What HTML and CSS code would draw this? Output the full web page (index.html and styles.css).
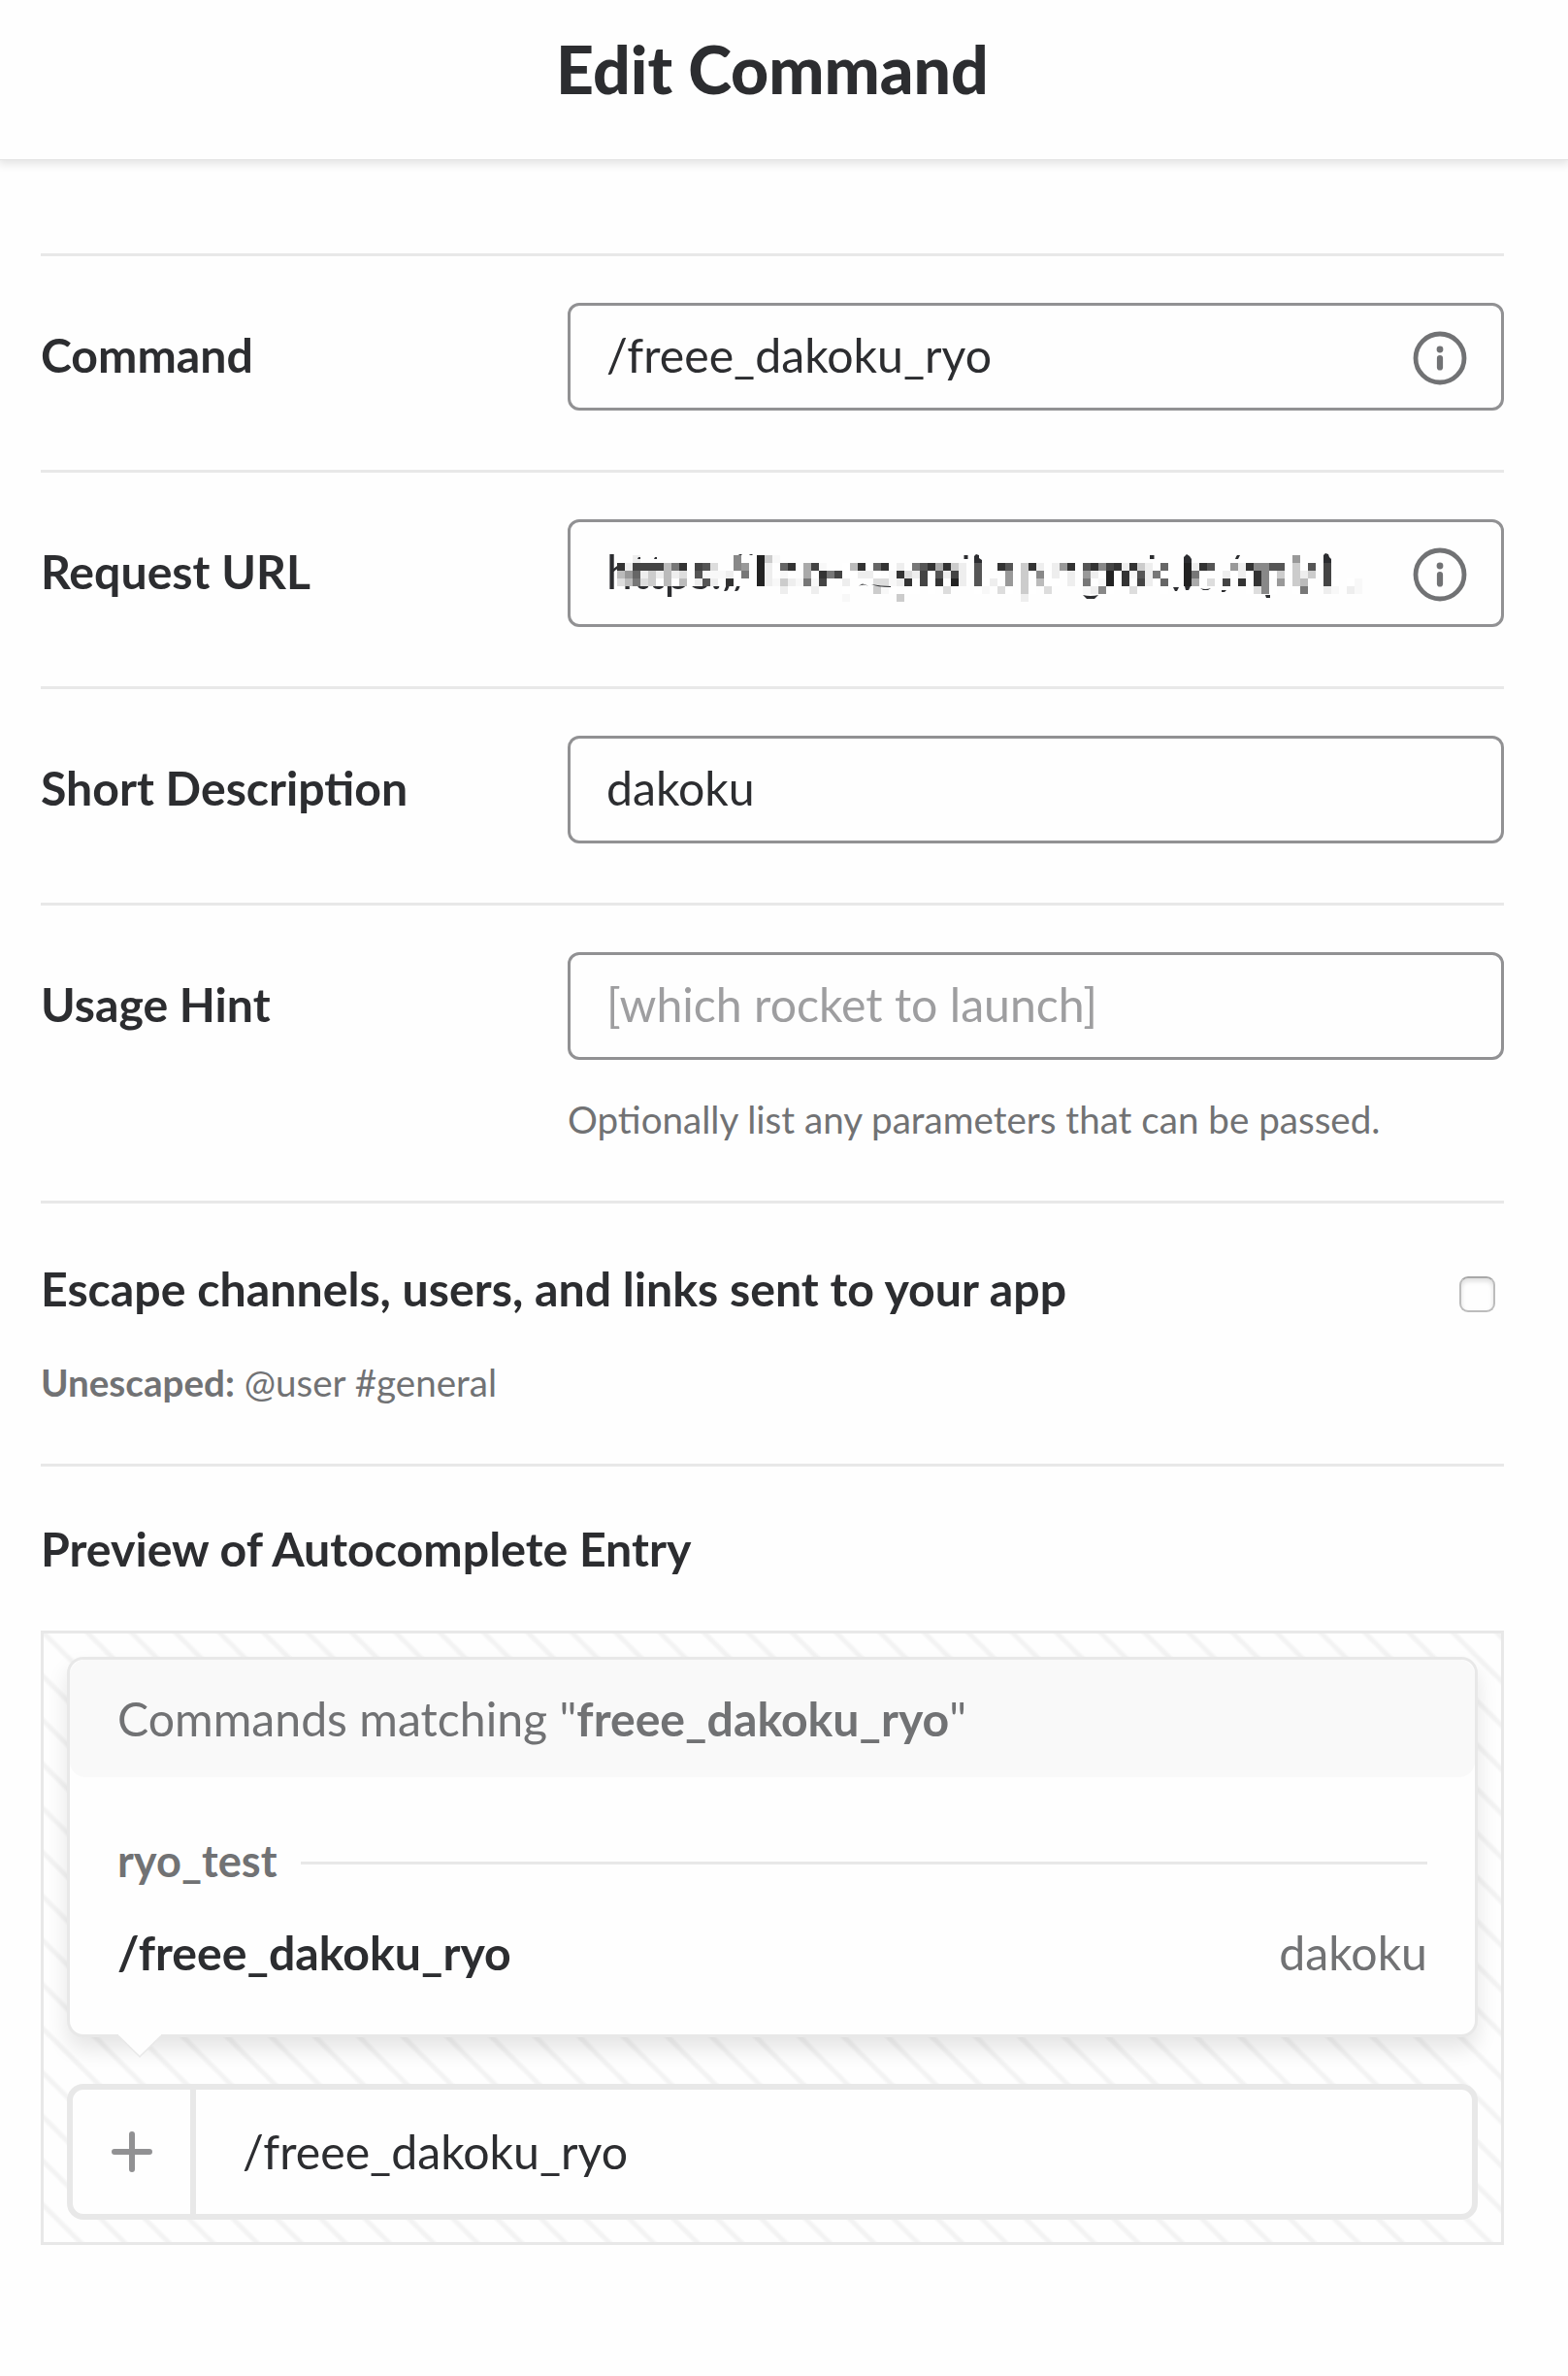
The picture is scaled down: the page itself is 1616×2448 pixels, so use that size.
FILE: index.html
```html
<!DOCTYPE html>
<html lang="en">
<head>
<meta charset="utf-8">
<title>Edit Command</title>
<link rel="stylesheet" href="styles.css">
</head>
<body>
<header class="header"><h1 class="title">Edit Command</h1></header>
<main class="form">
  <section class="row">
    <label class="label">Command</label>
    <div class="field"><div class="input"><span>/freee_dakoku_ryo</span>
      <svg class="info" viewBox="0 0 56 56"><circle cx="28" cy="28" r="25" fill="none" stroke="#717274" stroke-width="4.8"/><circle cx="28" cy="19" r="3.4" fill="#717274"/><path d="M28 28v9.4" stroke="#717274" stroke-width="6.2" stroke-linecap="round"/></svg>
    </div></div>
  </section>
  <section class="row">
    <label class="label">Request URL</label>
    <div class="field"><div class="input"><span>https://</span>
      <svg class="mosaic" id="mosaic" viewBox="0 0 800 56"></svg>
      <svg class="info" viewBox="0 0 56 56"><circle cx="28" cy="28" r="25" fill="none" stroke="#717274" stroke-width="4.8"/><circle cx="28" cy="19" r="3.4" fill="#717274"/><path d="M28 28v9.4" stroke="#717274" stroke-width="6.2" stroke-linecap="round"/></svg>
    </div></div>
  </section>
  <section class="row">
    <label class="label">Short Description</label>
    <div class="field"><div class="input"><span>dakoku</span></div></div>
  </section>
  <section class="row row-hint">
    <label class="label">Usage Hint</label>
    <div class="field"><div class="input placeholder"><span>[which rocket to launch]</span></div>
    <p class="help">Optionally list any parameters that can be passed.</p></div>
  </section>
  <section class="row row-escape">
    <div>
      <div class="escape-title">Escape channels, users, and links sent to your app</div>
      <p class="unescaped"><b>Unescaped:</b> @user #general</p>
    </div>
    <i class="checkbox"></i>
  </section>
  <section class="row row-preview">
    <h2 class="preview-title">Preview of Autocomplete Entry</h2>
    <div class="preview">
      <div class="popup">
        <div class="popup-head">Commands matching "<b>freee_dakoku_ryo</b>"</div>
        <div class="group"><span>ryo_test</span><i class="group-line"></i></div>
        <div class="entry"><b>/freee_dakoku_ryo</b><span>dakoku</span></div>
        <svg class="arrow" viewBox="0 0 46 26"><path d="M1 0H45V3L23 24.5L1 3Z" fill="#fefefe"/><path d="M1 2.5L23 24L45 2.5" fill="none" stroke="#e8e8e8" stroke-width="1.6"/></svg>
      </div>
      <div class="message">
        <div class="plus"><svg viewBox="0 0 42 42"><path d="M21 3v36M3 21h36" stroke="#919193" stroke-width="6" stroke-linecap="round"/></svg></div>
        <div class="message-text">/freee_dakoku_ryo</div>
      </div>
    </div>
  </section>
</main>
<script src="mosaic.js"></script>
</body>
</html>
```
FILE: styles.css
```css
* { box-sizing: border-box; }
body { margin: 0; background: #fefefe; color: #2c2d30; font-family: Lato, "Liberation Sans", sans-serif; font-size: 48.2px; line-height: 60px; }
h1, h2, p { margin: 0; }
.header { height: 164px; padding: 26px 0 0; box-shadow: 0 1px 0 #e4e4e4, 0 3px 9px 2px rgba(0,0,0,.11); }
.title { font-size: 67.9px; line-height: 90px; font-weight: 900; text-align: center; padding-right: 24px; }
.form { padding: 97px 66px 0 42px; }
.row { height: 223px; padding-top: 48px; border-top: 3px solid #e8e8e8; display: flex; }
.label { width: 543px; padding-top: 23px; font-weight: 700; }
.field { width: 965px; }
.input { position: relative; height: 111px; padding: 20px 37px; border: 3px solid #919193; border-radius: 12px; display: flex; justify-content: space-between; white-space: pre; }
.placeholder { color: #9e9ea0; }
.info { width: 56px; height: 56px; margin: 6px -2px 0 0; flex: none; }
.mosaic { position: absolute; left: 32px; top: 34px; width: 800px; height: 56px; overflow: visible; }
.row-hint { height: 307px; }
.help { margin-top: 36px; font-size: 38.6px; line-height: 50px; color: #717274; }
.row-escape { height: 271px; justify-content: space-between; }
.escape-title { padding-top: 9px; font-size: 48.25px; font-weight: 700; }
.unescaped { margin-top: 42px; font-size: 38.6px; line-height: 50px; color: #717274; }
.checkbox { width: 37px; height: 37px; margin: 27px 9px 0 0; border: 2px solid #bcbcbc; border-top-color: #a8a8a8; border-radius: 9px; box-shadow: inset 0 3px 5px #dedede; }
.row-preview { display: block; height: auto; }
.preview-title { font-size: 48.25px; line-height: 60px; padding-top: 6px; }
.preview { height: 633px; margin-top: 55px; padding: 24px; border: 3px solid #e8e8e8; background: repeating-linear-gradient(45deg, #fefefe 0 22.5px, #f3f3f3 25.5px 27.5px, #fefefe 30.5px 32.1px); }
.popup { position: relative; height: 392px; border: 3px solid #e8e8e8; border-radius: 17px; background: #fefefe; box-shadow: 0 12px 22px rgba(0,0,0,.1); }
.popup-head { height: 121px; padding: 30px 49px; border-radius: 16px; background: #f9f9f9; color: #717274; }
.group { display: flex; align-items: center; margin: 54px 49px 0; height: 69px; color: #717274; font-size: 45.2px; font-weight: 700; }
.group span { padding-bottom: 6px; }
.group-line { flex: 1; height: 3px; margin-left: 25px; background: #e8e8e8; }
.entry { display: flex; justify-content: space-between; margin: 27px 49px 0; color: #717274; }
.entry b { color: #2c2d30; }
.arrow { position: absolute; left: 49px; top: 385px; width: 46px; height: 26px; }
.message { display: flex; height: 140px; margin-top: 48px; border: 6px solid #e8e8e8; border-radius: 17px; background: #fefefe; }
.plus { width: 127px; border-right: 6px solid #e8e8e8; display: grid; place-items: center; }
.plus svg { width: 42px; height: 42px; }
.message-text { padding: 33px 48px; }
```
FILE: mosaic.js
```js
// Redacted part of the URL: one entry per 8px column, six shades from top to bottom.
// "." is clear, "-" is white, "g" is near white, 0-f is a grey level.
const columns = `
.3bd.. .e9b.. e467.. -4ed.. -4cc.. -4e-.. -bbb.. -7ef.. -3db.. .---.. .45e.. .5g5.. .dge.. .-g-.. .-e3.. 88ff.. -97-.. f---..
2222.. ceee-- g--g-- -6gce- -3fe-- ---g-- -aa7-- -4-ge- -g34-- --7--- --4--- -ffefg -bf--- -3e--. -fe--. -6fdc- -3-dg- --ggf-
-e3e-c --d3f- -7e-f- -544-- -3--f- -a53-- -3e-d- -c42-- -eee-- .---.. .555f- ---fg- ---e-- -3--d- -599f- ------ -cccce -3--f-
-e8b-- --ffd- -eef-- -9---- -3ee-- ------ -597g. -3e-e. -8-g8. -422f- -3---- -e33-- -3g-d- -c54-- .eee-- .-7f-- -6f6f- .---..
.---.. .222.. -e7a.. -3--.. -5-d.. .---.. .-e4.. .9f--- -ee3-- -3f-f- -833d- -8888. -5f-f- -5c9-- ------ 9cccf- --eb7-
-5c--- ------ .444e- ---fg- ------ ---fe- ---gg-`.trim().split(/\s+/);
const shade = c => c === '-' ? '#fefefe' : c === 'g' ? '#f8f8f8' : '#' + c.repeat(3);
let cells = '';
columns.forEach((col, x) => [...col].forEach((c, y) => {
  if (c !== '.') cells += `<rect x="${16 + x * 8}" y="${y * 8}" width="8" height="8" fill="${shade(c)}"/>`;
}));
// Slivers of the original glyphs left visible around the blocks.
const bits = [
  'M384 8V1l2-2 3 1v3l3 2v3z', 'M373.500 0h4v4h-4z', 'M565 0h4.500v4h-4.500z',
  'M600 8V2l3-3 3 2 2 3v4z', 'M744 8V0l2-2 3 1 1 3 2 2v4z', 'M653 4q1-3 2-4h3l-2 4z',
  'M589 33h6l-2 4h-2z', 'M601 32h6l-2 4h-3z', 'M617 34q5 2 11 0l-3 2h-5z', 'M639 36l5 0-2 2h-3z',
  'M496 41q8 2 16 0l-4 4h-8z', 'M684 41h5v3h-4z', 'M265 31.500l4-2 6 2-5-1z', 'M278 30q10 2 20 2v1q-14 0-20-3z',
  'M37 4l1-2h2v2z', 'M54 4l1-2h2v2z',
].join('');
document.getElementById('mosaic').innerHTML = `<g shape-rendering="crispEdges">${cells}</g><path d="${bits}" fill="#2c2d30"/>`;
```
